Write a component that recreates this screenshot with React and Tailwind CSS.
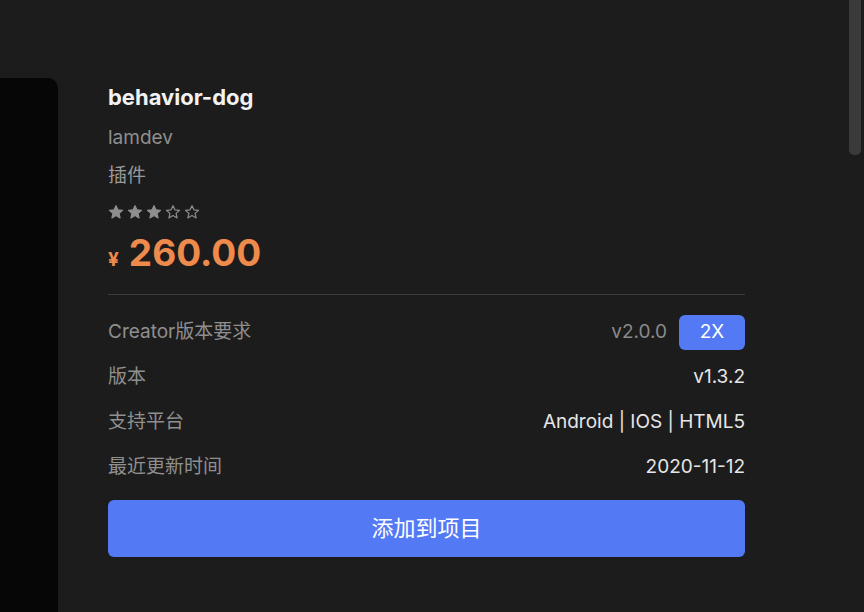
const Star = ({ filled }) => (
  <svg width="16" height="16" viewBox="0 0 24 24" className="shrink-0">
    <path
      d="M12 2.5l2.9 6.3 6.9.7-5.2 4.6 1.5 6.8L12 17.4l-6.1 3.5 1.5-6.8-5.2-4.6 6.9-.7z"
      fill={filled ? "#8e8e8e" : "none"}
      stroke="#8e8e8e"
      strokeWidth="1.8"
      strokeLinejoin="round"
    />
  </svg>
);

const Row = ({ label, children }) => (
  <div className="flex items-center justify-between h-[45px]">
    <span className="text-[#8f8f8f]">{label}</span>
    <div className="flex items-center gap-3 text-[#e6e6e6]">{children}</div>
  </div>
);

export default function App() {
  return (
    <div
      className="relative flex w-[864px] h-[612px] overflow-hidden bg-[#1c1c1c] text-[19px]"
      style={{ fontFamily: 'Inter, "Noto Sans CJK SC", sans-serif' }}
    >
      <div className="w-[58px] mt-[78px] bg-[#060606] rounded-tr-[10px]" />

      <div className="ml-[50px] w-[637px] pt-[81px]">
        <h1 className="text-[22px] font-bold leading-[32px] text-[#f2f2f2]">behavior-dog</h1>
        <p className="mt-[9px] leading-[32px] text-[#8f8f8f]">lamdev</p>
        <p className="mt-[6px] leading-[32px] text-[#9a9a9a]">插件</p>
        <div className="flex gap-[3px] mt-[12px] h-[16px] items-center">
          <Star filled />
          <Star filled />
          <Star filled />
          <Star />
          <Star />
        </div>
        <div className="flex items-baseline mt-[11px] text-[#ee8a4b] font-bold">
          <span className="text-[19px] mr-[10px]">¥</span>
          <span className="text-[37px] leading-[44px]">260.00</span>
        </div>

        <div className="mt-[19px] h-px bg-[#3c3c3c]" />

        <div className="mt-[15px]">
          <Row label="Creator版本要求">
            <span className="text-[#8a8a8a]">v2.0.0</span>
            <span className="flex items-center justify-center w-[66px] h-[35px] rounded-[6px] bg-[#5479f4] text-white">
              2X
            </span>
          </Row>
          <Row label="版本">v1.3.2</Row>
          <Row label="支持平台">Android | IOS | HTML5</Row>
          <Row label="最近更新时间">2020-11-12</Row>
        </div>

        <button className="mt-[10px] w-full h-[57px] rounded-[6px] bg-[#5479f4] text-white text-[22px]">
          添加到项目
        </button>
      </div>

      <div className="absolute right-[3px] top-0 w-[12px] h-[155px] rounded-b-[5px] bg-[#3a3a3a]" />
    </div>
  );
}
